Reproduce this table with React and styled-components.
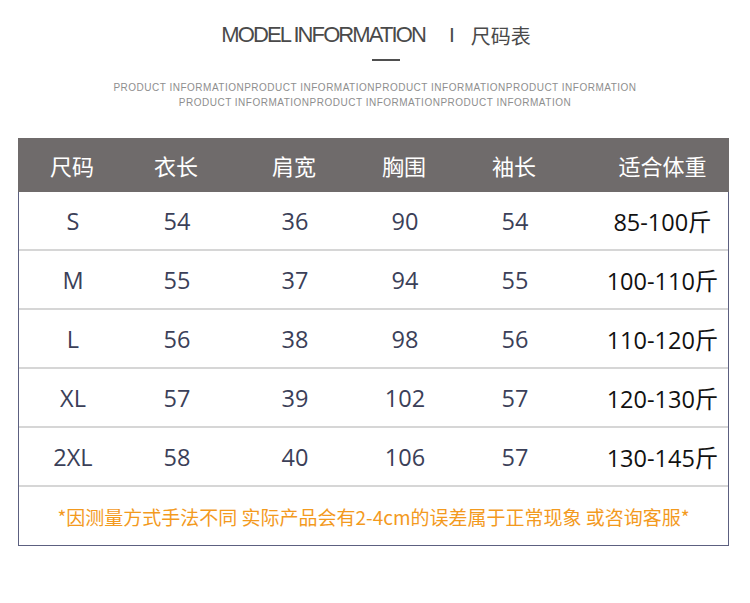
import React from "react";
import styled, { createGlobalStyle } from "styled-components";

const GlobalStyle = createGlobalStyle`
  html, body {
    margin: 0;
    padding: 0;
    background: #ffffff;
  }
`;

const columns = ["尺码", "衣长", "肩宽", "胸围", "袖长", "适合体重"];

const rows = [
  ["S", "54", "36", "90", "54", "85-100斤"],
  ["M", "55", "37", "94", "55", "100-110斤"],
  ["L", "56", "38", "98", "56", "110-120斤"],
  ["XL", "57", "39", "102", "57", "120-130斤"],
  ["2XL", "58", "40", "106", "57", "130-145斤"],
];

const App = () => {
  return (
    <Page>
      <GlobalStyle />
      <TitleRow>
        <TitleEn>MODEL INFORMATION</TitleEn>
        <TitleBar>I</TitleBar>
        <TitleCn>尺码表</TitleCn>
      </TitleRow>
      <Dash />
      <SubLines>
        <span>PRODUCT INFORMATIONPRODUCT INFORMATIONPRODUCT INFORMATIONPRODUCT INFORMATION</span>
        <span>PRODUCT INFORMATIONPRODUCT INFORMATIONPRODUCT INFORMATION</span>
      </SubLines>
      <Table>
        <HeadRow>
          {columns.map((c) => (
            <Cell key={c}>{c}</Cell>
          ))}
        </HeadRow>
        {rows.map((r) => (
          <BodyRow key={r[0]}>
            {r.map((v, i) => (
              <Cell key={i} $dark={i === 5}>
                {v}
              </Cell>
            ))}
          </BodyRow>
        ))}
        <Note>*因测量方式手法不同 实际产品会有2-4cm的误差属于正常现象 或咨询客服*</Note>
      </Table>
    </Page>
  );
};

const Page = styled.div`
  width: 750px;
  height: 603px;
  padding-top: 20px;
  box-sizing: border-box;
  font-family: "Noto Sans CJK SC", "Liberation Sans", sans-serif;
`;

const TitleRow = styled.div`
  display: flex;
  align-items: center;
  justify-content: center;
  height: 30px;
  color: #4a4a4a;
  padding-left: 2px;
`;

const TitleEn = styled.span`
  font-family: "Liberation Sans", sans-serif;
  font-size: 22px;
  letter-spacing: -1.9px;
`;

const TitleBar = styled.span`
  font-family: "Liberation Sans", sans-serif;
  font-size: 21px;
  margin: 0 16px 0 24px;
`;

const TitleCn = styled.span`
  font-family: "Noto Sans CJK SC", sans-serif;
  font-size: 20px;
`;

const Dash = styled.div`
  width: 28px;
  height: 2px;
  background: #4f4f4f;
  margin: 9px auto 0;
  position: relative;
  left: 11px;
`;

const SubLines = styled.div`
  display: flex;
  flex-direction: column;
  align-items: center;
  margin-top: 19px;
  font-family: "Liberation Sans", sans-serif;
  font-size: 10px;
  line-height: 15px;
  letter-spacing: 0.5px;
  color: #8e8e8e;
`;

const Table = styled.div`
  margin: 28px 21px 0 18px;
  border: 1px solid #5c6080;
  border-top: none;
`;

const grid = `
  display: grid;
  grid-template-columns: 108px 100px 136px 84px 136px 1fr;
  align-items: center;
`;

const HeadRow = styled.div`
  ${grid}
  height: 54px;
  margin: 0 -1px;
  background: #6f6b6b;
  color: #ffffff;
  font-size: 22px;
`;

const BodyRow = styled.div`
  ${grid}
  height: 57px;
  border-bottom: 2px solid #d6d6d6;
  font-family: "Open Sans", "Noto Sans CJK SC", sans-serif;
  font-size: 23.5px;
  color: #3b4058;
`;

const Cell = styled.div`
  text-align: center;
  color: ${(p) => (p.$dark ? "#111111" : "inherit")};
  &:nth-child(6) {
    padding-left: 14px;
  }
`;

const Note = styled.div`
  height: 58px;
  display: flex;
  align-items: center;
  justify-content: center;
  font-size: 19px;
  color: #f39a1e;
`;

export default App;
